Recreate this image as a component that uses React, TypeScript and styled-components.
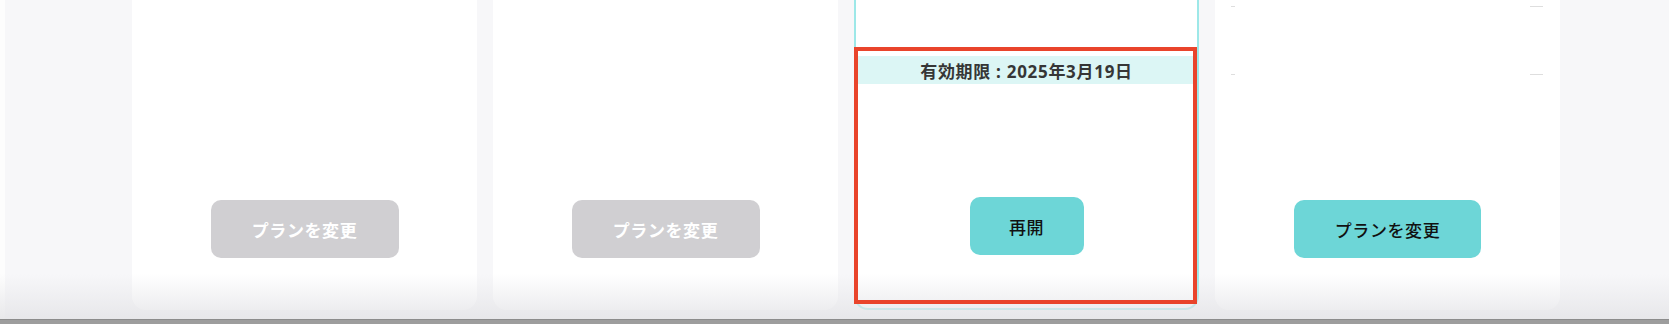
import React from 'react';
import styled, { createGlobalStyle } from 'styled-components';

const GlobalStyle = createGlobalStyle`
    html, body {
        margin: 0;
        padding: 0;
        background: #f7f7f9;
        font-family: "Noto Sans", "Noto Sans CJK JP", sans-serif;
    }
`;

const Page = styled.div`
    position: relative;
    height: 324px;
    overflow: hidden;
    display: flex;
    flex-direction: column;
    background: #f7f7f9;
`;

const Main = styled.div`
    flex: 1;
    display: flex;
    min-height: 0;
`;

const EdgeStrip = styled.div`
    width: 5px;
    background: #fdfdfd;
`;

const CardRow = styled.div`
    display: flex;
    gap: 16px;
    padding-left: 127px;
    margin-top: -30px;
    align-items: flex-start;
`;

const Card = styled.div<{ $active?: boolean }>`
    position: relative;
    box-sizing: border-box;
    width: 345px;
    height: 340px;
    display: flex;
    flex-direction: column;
    background: #ffffff;
    border-radius: 14px;
    border: ${p => (p.$active ? '2px solid #9de8e8' : 'none')};
`;

const CardBody = styled.div`
    flex: 1;
    display: flex;
    flex-direction: column;
`;

const CardFooter = styled.div<{ $bottom: number }>`
    display: flex;
    justify-content: center;
    padding-bottom: ${p => p.$bottom}px;
`;

const ExpiryBand = styled.div`
    margin-top: 84px;
    height: 28px;
    display: flex;
    align-items: center;
    justify-content: center;
    background: #dcf6f5;
    color: #363636;
    font-size: 17px;
    font-weight: 700;
    letter-spacing: 0.7px;
    white-space: pre;
`;

const Divider = styled.div<{ $top: number }>`
    margin: ${p => p.$top}px 17px 0 16px;
    height: 1px;
    background: linear-gradient(
        to right,
        #dedede 0,
        #dedede 4px,
        transparent 4px,
        transparent calc(100% - 13px),
        #dedede calc(100% - 13px)
    );
`;

const Button = styled.button<{ $variant: 'muted' | 'primary'; $width: number }>`
    width: ${p => p.$width}px;
    height: 58px;
    border: none;
    border-radius: 10px;
    font-family: inherit;
    font-size: 17px;
    letter-spacing: 0.6px;
    cursor: pointer;
    background: ${p => (p.$variant === 'primary' ? '#6dd6d7' : '#d0cfd2')};
    color: ${p => (p.$variant === 'primary' ? '#111111' : '#ffffff')};
    font-weight: ${p => (p.$variant === 'primary' ? 500 : 700)};
`;

const Annotation = styled.div`
    position: absolute;
    z-index: 2;
    left: -2px;
    right: 0;
    top: 75px;
    bottom: 4px;
    border: 4.5px solid #e9442b;
    pointer-events: none;
`;

const BottomFade = styled.div`
    position: absolute;
    z-index: 1;
    left: 0;
    right: 0;
    bottom: 4px;
    height: 46px;
    background: linear-gradient(to bottom, rgba(232, 232, 235, 0), rgba(228, 228, 231, 0.85));
    pointer-events: none;
`;

const BottomBar = styled.div`
    height: 4px;
    background: #9d9d9d;
    border-top: 1px solid #8c8c8c;
    position: relative;
    z-index: 3;
`;

export default function App() {
    return (
        <Page>
            <GlobalStyle />
            <Main>
                <EdgeStrip />
                <CardRow>
                    <Card>
                        <CardBody />
                        <CardFooter $bottom={52}>
                            <Button $variant="muted" $width={188}>プランを変更</Button>
                        </CardFooter>
                    </Card>
                    <Card>
                        <CardBody />
                        <CardFooter $bottom={52}>
                            <Button $variant="muted" $width={188}>プランを変更</Button>
                        </CardFooter>
                    </Card>
                    <Card $active>
                        <CardBody>
                            <ExpiryBand>{'有効期限 : 2025年3月19日'}</ExpiryBand>
                        </CardBody>
                        <CardFooter $bottom={53}>
                            <Button $variant="primary" $width={114}>再開</Button>
                        </CardFooter>
                        <Annotation />
                    </Card>
                    <Card>
                        <CardBody>
                            <Divider $top={36} />
                            <Divider $top={67} />
                        </CardBody>
                        <CardFooter $bottom={52}>
                            <Button $variant="primary" $width={187}>プランを変更</Button>
                        </CardFooter>
                    </Card>
                </CardRow>
            </Main>
            <BottomFade />
            <BottomBar />
        </Page>
    );
}
